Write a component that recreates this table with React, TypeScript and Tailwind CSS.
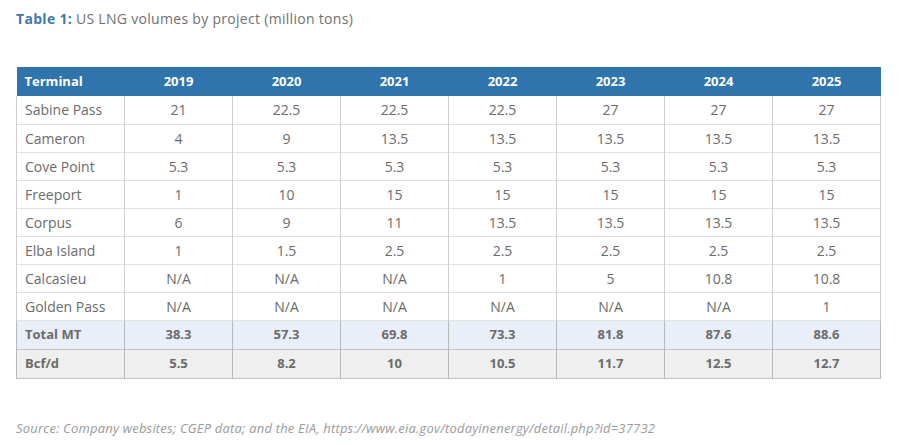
const years = ["2019", "2020", "2021", "2022", "2023", "2024", "2025"];

const rows: [string, string[]][] = [
  ["Sabine Pass", ["21", "22.5", "22.5", "22.5", "27", "27", "27"]],
  ["Cameron", ["4", "9", "13.5", "13.5", "13.5", "13.5", "13.5"]],
  ["Cove Point", ["5.3", "5.3", "5.3", "5.3", "5.3", "5.3", "5.3"]],
  ["Freeport", ["1", "10", "15", "15", "15", "15", "15"]],
  ["Corpus", ["6", "9", "11", "13.5", "13.5", "13.5", "13.5"]],
  ["Elba Island", ["1", "1.5", "2.5", "2.5", "2.5", "2.5", "2.5"]],
  ["Calcasieu", ["N/A", "N/A", "N/A", "1", "5", "10.8", "10.8"]],
  ["Golden Pass", ["N/A", "N/A", "N/A", "N/A", "N/A", "N/A", "1"]],
];

const totals: [string, string[], string][] = [
  ["Total MT", ["38.3", "57.3", "69.8", "73.3", "81.8", "87.6", "88.6"], "bg-[#e9eff8]"],
  ["Bcf/d", ["5.5", "8.2", "10", "10.5", "11.7", "12.5", "12.7"], "bg-[#efefef]"],
];

export default function App() {
  return (
    <div
      className="w-[900px] h-[445px] bg-white px-4 pt-[9px] text-[#6b6b6b]"
      style={{ fontFamily: '"Open Sans", "DejaVu Sans", sans-serif' }}
    >
      <p className="text-[14px] leading-[19px] tracking-[0.3px] text-[#707070]">
        <span className="font-bold text-[#3a7bb0]">Table 1:</span> US LNG volumes by project (million tons)
      </p>

      <table className="mt-[39px] w-[864px] table-fixed border-collapse text-[14px]">
        <thead>
          <tr className="h-[29px] bg-[#2f74ad] text-[13px] text-white">
            <th className="w-[108px] pl-2 text-left font-bold">Terminal</th>
            {years.map((y) => (
              <th key={y} className="w-[108px] text-center font-bold">
                {y}
              </th>
            ))}
          </tr>
        </thead>
        <tbody>
          {rows.map(([name, vals]) => (
            <tr key={name} className="h-[28px] border-b border-[#e2e2e2]">
              <td className="pl-2 text-left border-l border-r border-[#d0d0d0]">{name}</td>
              {vals.map((v, i) => (
                <td key={i} className="text-center border-r border-[#d0d0d0]">
                  {v}
                </td>
              ))}
            </tr>
          ))}
          {totals.map(([name, vals, bg]) => (
            <tr key={name} className={`h-[29px] border-b border-[#c4c4c4] text-[13px] font-bold ${bg}`}>
              <td className="pl-2 text-left border-l border-r border-[#b8b8b8]">{name}</td>
              {vals.map((v, i) => (
                <td key={i} className="text-center border-r border-[#b8b8b8]">
                  {v}
                </td>
              ))}
            </tr>
          ))}
        </tbody>
      </table>

      <p className="mt-[40px] text-[13px] tracking-[0.2px] italic text-[#9a9a9a]">
        Source: Company websites; CGEP data; and the EIA, https://www.eia.gov/todayinenergy/detail.php?id=37732
      </p>
    </div>
  );
}
